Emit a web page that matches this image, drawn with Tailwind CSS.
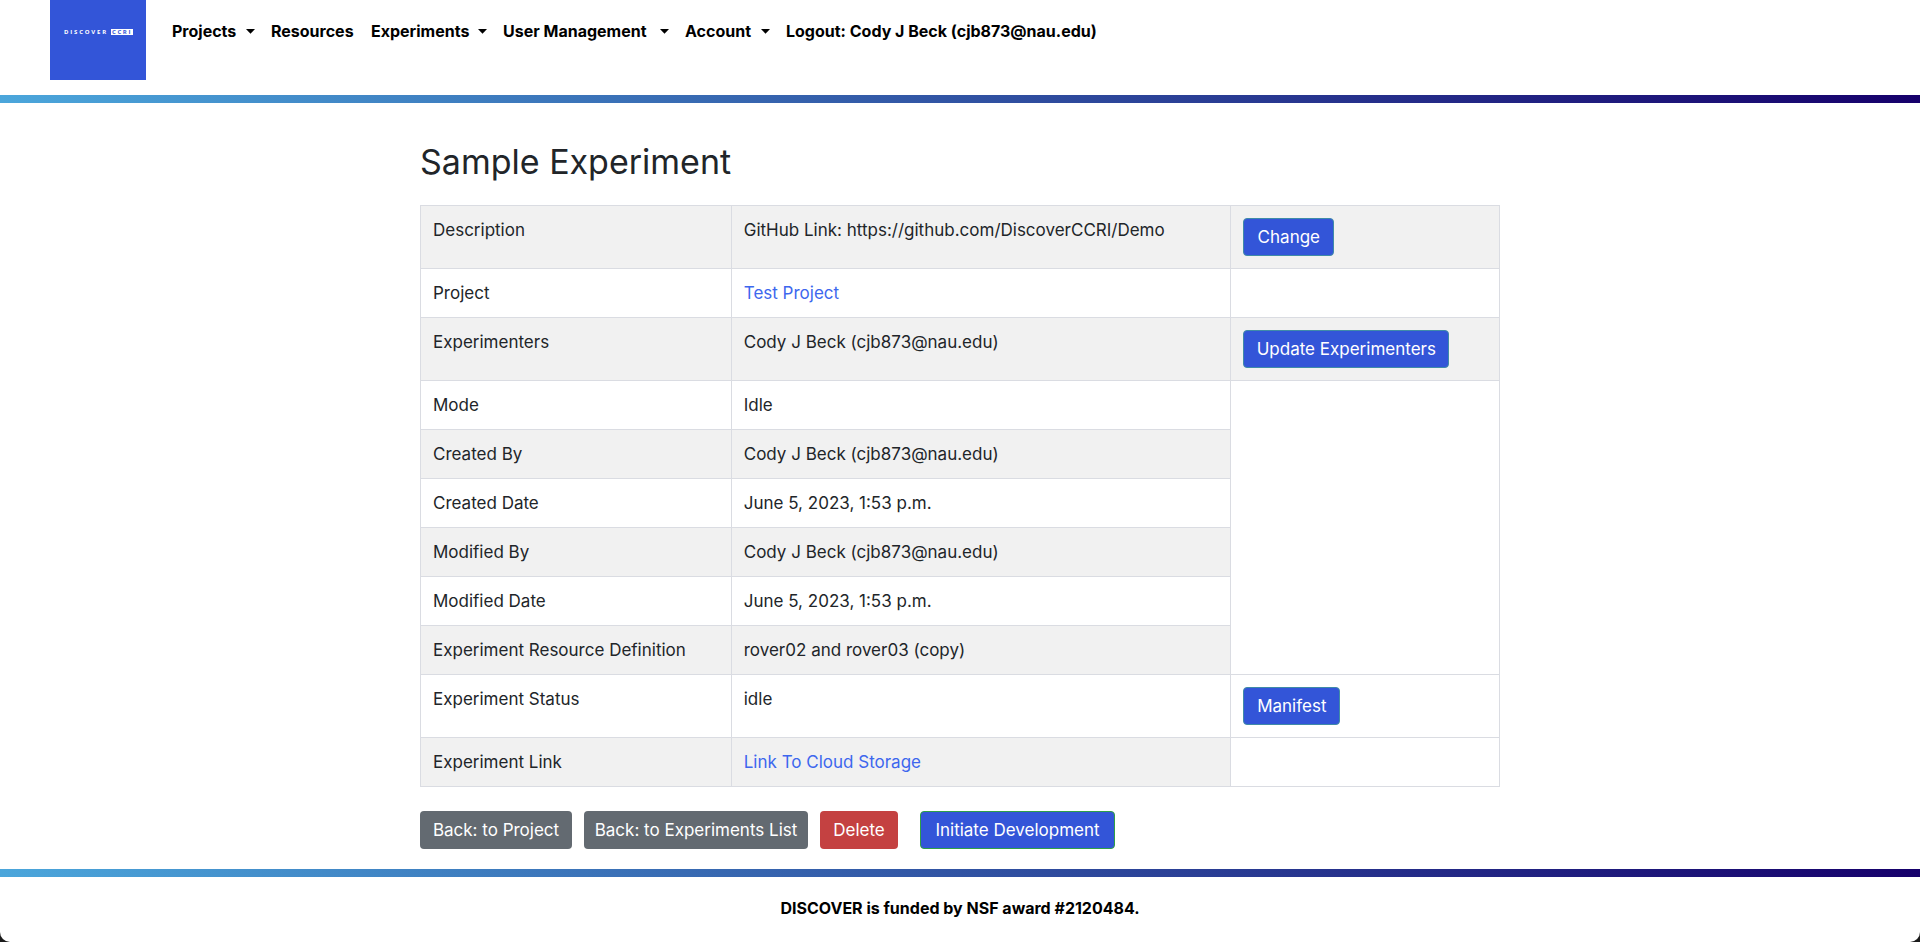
<!DOCTYPE html>
<html lang="en">
<head>
<meta charset="utf-8">
<meta name="viewport" content="width=device-width, initial-scale=1">
<title>Sample Experiment</title>
<script src="https://cdn.jsdelivr.net/npm/@tailwindcss/browser@4"></script>
</head>
<body class="bg-[#1b1b1b] font-['Inter',sans-serif] text-[16px] leading-6 text-[#212529]">
<div class="flex min-h-screen flex-col overflow-hidden rounded-b-[10px] bg-white">
  <header class="flex items-start px-[50px] pb-[15px]">
    <a href="#" aria-label="Discover CCRI" class="block h-20 w-24 bg-[#3355d8]">
      <svg viewBox="0 0 96 80" class="h-20 w-24" font-family="Open Sans, sans-serif" font-size="6" font-weight="700">
        <text x="14" y="34" fill="#fff" letter-spacing="1.8">DISCOVER</text>
        <rect x="61" y="29" width="22" height="6" fill="#fff"/>
        <text x="62" y="34" fill="#3355d8" letter-spacing="1.6">CCRI</text>
      </svg>
    </a>
    <nav class="ml-[26px] flex flex-wrap items-center gap-4 pt-[19px] font-bold text-black">
      <button class="flex min-w-[83px] items-center justify-between gap-1">Projects<svg class="h-[5px] w-[9px]" viewBox="0 0 9 5"><path d="M0 0h9L4.500 4.800z"/></svg></button>
      <a href="#" class="min-w-[84px]">Resources</a>
      <button class="flex min-w-[116px] items-center justify-between gap-1">Experiments<svg class="h-[5px] w-[9px]" viewBox="0 0 9 5"><path d="M0 0h9L4.500 4.800z"/></svg></button>
      <button class="flex min-w-[166px] items-center justify-between gap-1">User Management<svg class="h-[5px] w-[9px]" viewBox="0 0 9 5"><path d="M0 0h9L4.500 4.800z"/></svg></button>
      <button class="flex min-w-[85px] items-center justify-between gap-1">Account<svg class="h-[5px] w-[9px]" viewBox="0 0 9 5"><path d="M0 0h9L4.500 4.800z"/></svg></button>
      <a href="#">Logout: Cody J Beck (cjb873@nau.edu)</a>
    </nav>
  </header>
  <div class="h-2 bg-linear-to-r/srgb from-[#4ba6db] to-[#16006b]"></div>
  <main class="mx-auto w-full max-w-[1110px] px-[15px] pt-10 pb-5 text-[17px] leading-6">
    <h1 class="mb-6 text-[34px] leading-[38px]">Sample Experiment</h1>
    <table class="w-full table-fixed border-collapse [&_td]:border [&_td]:border-[#dadce2] [&_td]:p-3 [&_td]:align-top [&_th]:border [&_th]:border-[#dadce2] [&_th]:p-3 [&_th]:text-left [&_th]:align-top [&_th]:font-normal">
      <colgroup><col class="w-[28.8%]"><col class="w-[46.3%]"><col></colgroup>
      <tbody>
        <tr class="bg-[#f1f1f1]"><th scope="row">Description</th><td>GitHub Link: https://github.com/DiscoverCCRI/Demo</td><td><button class="block h-[38px] min-w-[91px] rounded border border-[#3f8ba8] bg-[#3355d8] px-2 text-white">Change</button></td></tr>
        <tr><th scope="row">Project</th><td><a href="#" class="text-[#3d67ee]">Test Project</a></td><td></td></tr>
        <tr class="bg-[#f1f1f1]"><th scope="row">Experimenters</th><td>Cody J Beck (cjb873@nau.edu)</td><td><button class="block h-[38px] min-w-[206px] rounded border border-[#3f8ba8] bg-[#3355d8] px-2 text-white">Update Experimenters</button></td></tr>
        <tr><th scope="row">Mode</th><td>Idle</td><td rowspan="6"></td></tr>
        <tr class="bg-[#f1f1f1]"><th scope="row">Created By</th><td>Cody J Beck (cjb873@nau.edu)</td></tr>
        <tr><th scope="row">Created Date</th><td>June 5, 2023, 1:53 p.m.</td></tr>
        <tr class="bg-[#f1f1f1]"><th scope="row">Modified By</th><td>Cody J Beck (cjb873@nau.edu)</td></tr>
        <tr><th scope="row">Modified Date</th><td>June 5, 2023, 1:53 p.m.</td></tr>
        <tr class="bg-[#f1f1f1]"><th scope="row">Experiment Resource Definition</th><td>rover02 and rover03 (copy)</td></tr>
        <tr><th scope="row">Experiment Status</th><td>idle</td><td><button class="block h-[38px] min-w-[97px] rounded border border-[#3f8ba8] bg-[#3355d8] px-2 text-white">Manifest</button></td></tr>
        <tr><th scope="row" class="bg-[#f1f1f1]">Experiment Link</th><td class="bg-[#f1f1f1]"><a href="#" class="text-[#3d67ee]">Link To Cloud Storage</a></td><td></td></tr>
      </tbody>
    </table>
    <div class="mt-6 flex flex-wrap gap-3 text-white">
      <button class="h-[38px] min-w-[152px] rounded bg-[#636a71] px-2">Back: to Project</button>
      <button class="h-[38px] min-w-[224px] rounded bg-[#636a71] px-2">Back: to Experiments List</button>
      <button class="h-[38px] min-w-[78px] rounded bg-[#c44141] px-2">Delete</button>
      <button class="ml-[10px] h-[38px] min-w-[195px] rounded border border-[#2f9f46] bg-[#3355d8] px-2">Initiate Development</button>
    </div>
  </main>
  <div class="h-2 bg-linear-to-r/srgb from-[#4ba6db] to-[#16006b]"></div>
  <footer class="pt-[19px] text-center font-bold text-black">DISCOVER is funded by NSF award #2120484.</footer>
</div>
</body>
</html>
